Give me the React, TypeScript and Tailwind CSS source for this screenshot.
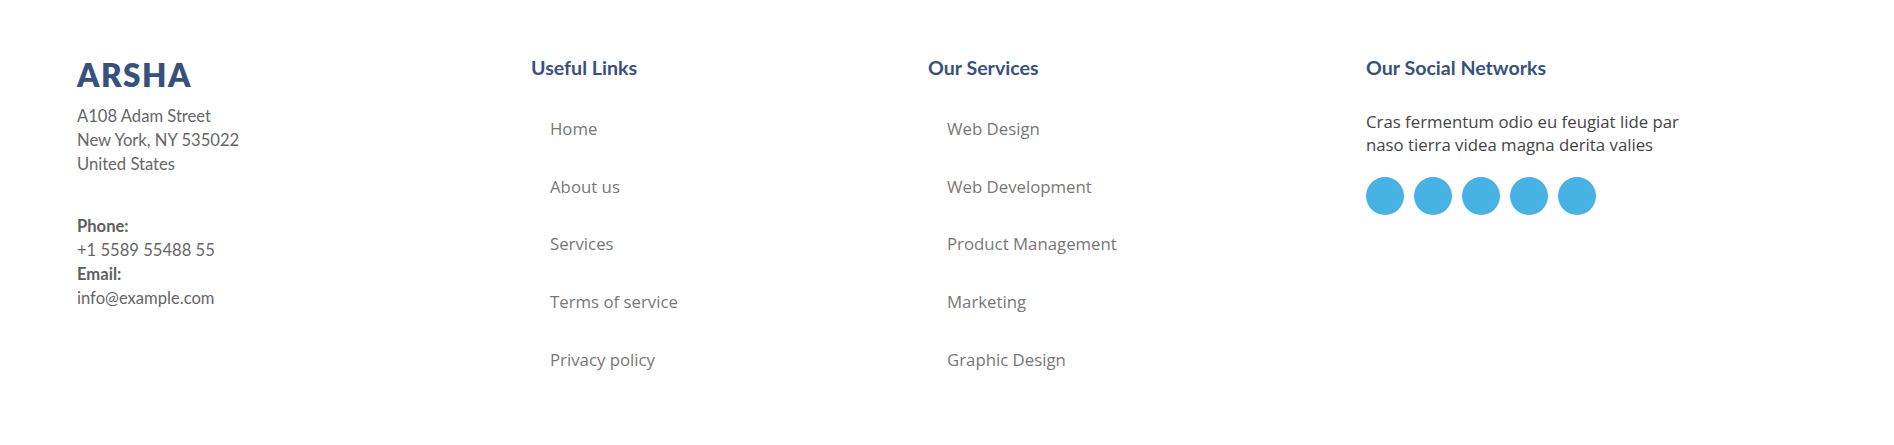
const USEFUL_LINKS = ["Home", "About us", "Services", "Terms of service", "Privacy policy"];
const SERVICES = ["Web Design", "Web Development", "Product Management", "Marketing", "Graphic Design"];

const heading = "font-['Lato',sans-serif] text-[19.6px] font-bold leading-[22.8px] text-[#37517e]";

function LinkList({ items }: { items: string[] }) {
  return (
    <ul className="mt-[20px] pl-[19px]">
      {items.map((item) => (
        <li key={item} className="font-['Open_Sans',sans-serif] text-[16.8px] leading-[57.7px] text-[#777777]">
          {item}
        </li>
      ))}
    </ul>
  );
}

export default function App() {
  return (
    <footer className="h-[445px] w-full bg-white">
      <div className="flex pl-[77px]">
        <div className="w-[454px] shrink-0 pt-[57px]">
          <h3 className="font-['Lato',sans-serif] text-[31.5px] font-extrabold leading-[37px] tracking-[1.5px] text-[#37517e]">
            ARSHA
          </h3>
          <p className="mt-[10px] font-['Lato',sans-serif] text-[16.6px] leading-[24px] text-[#666666]">
            A108 Adam Street
            <br />
            New York, NY 535022
            <br />
            United States
          </p>
          <p className="mt-[38px] font-['Lato',sans-serif] text-[16.6px] leading-[24px] text-[#666666]">
            <strong className="font-bold text-[#5e5e5e]">Phone:</strong>
            <br />
            +1 5589 55488 55
            <br />
            <strong className="font-bold text-[#5e5e5e]">Email:</strong>
            <br />
            info@example.com
          </p>
        </div>

        <div className="w-[397px] shrink-0 pt-[57px]">
          <h4 className={heading}>Useful Links</h4>
          <LinkList items={USEFUL_LINKS} />
        </div>

        <div className="w-[438px] shrink-0 pt-[57px]">
          <h4 className={heading}>Our Services</h4>
          <LinkList items={SERVICES} />
        </div>

        <div className="w-[340px] shrink-0 pt-[57px]">
          <h4 className={heading}>Our Social Networks</h4>
          <p className="mt-[30px] font-['Open_Sans',sans-serif] text-[16.8px] leading-[23.5px] text-[#444444]">
            Cras fermentum odio eu feugiat lide par naso tierra videa magna derita valies
          </p>
          <div className="mt-[20px] flex gap-[10px]">
            {["twitter", "facebook", "instagram", "skype", "linkedin"].map((name) => (
              <a key={name} aria-label={name} className="h-[38px] w-[38px] rounded-full bg-[#47b2e4]" />
            ))}
          </div>
        </div>
      </div>
    </footer>
  );
}
